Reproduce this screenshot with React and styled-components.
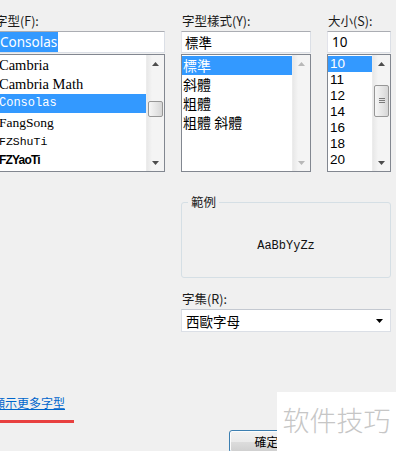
import React from "react";
import styled, { createGlobalStyle } from "styled-components";

const GlobalStyle = createGlobalStyle`
  html, body {
    margin: 0;
    background: #f0f0f0;
  }
  body {
    font-family: "Noto Sans", "Noto Sans CJK TC", sans-serif;
    color: #000;
  }
`;

const cjk = `"Noto Sans CJK TC", "Noto Sans", sans-serif`;

const Dialog = styled.div`
  position: relative;
  width: 396px;
  height: 451px;
  overflow: hidden;
  background: #f0f0f0;
`;

const Grid = styled.div`
  display: grid;
  grid-template-columns: 171px 130px 64px;
  column-gap: 16px;
  margin-left: -6px;
  padding-top: 13px;
`;

const Column = styled.div`
  display: flex;
  flex-direction: column;
`;

const Label = styled.div`
  font-family: ${cjk};
  font-size: 12.5px;
  line-height: 15px;
  height: 15px;
  margin-bottom: 3px;
  padding-left: ${(p) => p.$indent || 1}px;
  white-space: nowrap;
  color: #1a1a1a;
`;

const TextBox = styled.div`
  box-sizing: border-box;
  height: 22px;
  background: #fff;
  border: 1px solid #dbdfe6;
  border-top-color: #abadb3;
  border-left-color: #e2e3ea;
  padding-left: ${(p) => p.$pad || 3}px;
  font-family: ${(p) => p.$font || cjk};
  font-size: 13.5px;
  line-height: 20px;
  white-space: nowrap;
  overflow: hidden;
`;

const Selected = styled.span`
  background: #3399ff;
  color: #fff;
  padding: 1px 1px 1px 0;
`;

const ListBox = styled.div`
  box-sizing: border-box;
  margin-top: 1px;
  height: 118px;
  border: 1px solid #828790;
  background: #fff;
  display: flex;
`;

const Items = styled.div`
  flex: 1;
  padding-top: 1px;
  overflow: hidden;
`;

const Item = styled.div`
  height: ${(p) => p.$h}px;
  line-height: ${(p) => p.$h}px;
  padding-left: ${(p) => p.$pad}px;
  background: ${(p) => (p.$active ? "#3399ff" : "transparent")};
  color: ${(p) => (p.$active ? "#fff" : "#000")};
  font-family: ${(p) => p.$font};
  font-size: ${(p) => p.$size}px;
  font-weight: ${(p) => p.$weight || 400};
  letter-spacing: ${(p) => p.$ls || 0}px;
  white-space: nowrap;
  overflow: hidden;
`;

const ScrollBar = styled.div`
  width: 17px;
  display: flex;
  flex-direction: column;
  background: linear-gradient(to right, #e8e8e8, #f4f4f4 30%, #f4f4f4);
  border-left: 1px solid #ececec;
`;

const ArrowButton = styled.div`
  height: 17px;
  display: flex;
  align-items: center;
  justify-content: center;
`;

const Spacer = styled.div`
  flex: 1;
`;

const Thumb = styled.div`
  box-sizing: border-box;
  margin: ${(p) => p.$offset}px 1px 0 1px;
  height: ${(p) => p.$h}px;
  border: 1px solid #979797;
  border-radius: 2px;
  background: linear-gradient(to right, #f6f6f6, #e4e4e4 60%, #d6d6d6);
  display: flex;
  align-items: center;
  justify-content: center;
`;

const Group = styled.div`
  grid-column: 2 / 4;
  position: relative;
  box-sizing: border-box;
  margin-top: 30px;
  height: 76px;
  border: 1px solid #d5dfe5;
  border-radius: 3px;
  display: flex;
  align-items: center;
  justify-content: center;
  padding-top: 12px;
`;

const Legend = styled.span`
  position: absolute;
  top: -9px;
  left: 6px;
  padding: 0 3px;
  background: #f0f0f0;
  font-family: ${cjk};
  font-size: 12.5px;
  line-height: 15px;
  color: #1a1a1a;
`;

const SampleText = styled.span`
  font-family: "Liberation Mono", "DejaVu Sans Mono", monospace;
  font-size: 12px;
  color: #111;
`;

const Wide = styled.div`
  grid-column: 2 / 4;
  margin-top: ${(p) => p.$mt || 0}px;
`;

const Combo = styled.div`
  grid-column: 2 / 4;
  box-sizing: border-box;
  height: 23px;
  background: #fff;
  border: 1px solid #dbdfe6;
  border-top-color: #c4c9d1;
  display: flex;
  align-items: center;
  justify-content: space-between;
  padding: 0 7px 0 4px;
  font-family: ${cjk};
  font-size: 13.5px;
`;

const Footer = styled.div`
  padding-top: 63px;
`;

const MoreLink = styled.a`
  display: block;
  width: max-content;
  margin-left: -7px;
  font-family: ${cjk};
  font-size: 12px;
  line-height: 16px;
  color: #0066cc;
  text-decoration: underline;
  white-space: nowrap;
`;

const Marker = styled.div`
  width: 74px;
  height: 3px;
  margin-top: 9px;
  background: #e8403f;
`;

const ButtonRow = styled.div`
  display: flex;
  justify-content: flex-end;
  padding-right: 92px;
  margin-top: 7px;
`;

const Button = styled.button`
  box-sizing: border-box;
  width: 75px;
  height: 23px;
  border: 1px solid #3c7fb1;
  border-radius: 3px;
  background: linear-gradient(#f2f2f2, #ebebeb 50%, #dddddd 51%, #cfcfcf);
  box-shadow: inset 0 0 0 1px #fcfcfc;
  font-family: ${cjk};
  font-size: 12px;
  color: #000;
  padding: 0;
`;

const Watermark = styled.div`
  position: absolute;
  right: 0;
  bottom: 0;
  width: 119px;
  height: 59px;
  background: #fff;
  display: flex;
  align-items: center;
  justify-content: center;
  padding-bottom: 4px;
  box-sizing: border-box;
  font-family: "Noto Sans CJK SC", sans-serif;
  font-size: 27px;
  font-weight: 300;
  color: #c6c6c6;
  white-space: nowrap;
`;

function Arrow({ down, color = "#4d4d4d" }) {
  return (
    <svg width="7" height="4" viewBox="0 0 7 4">
      <polygon
        points={down ? "0,0 7,0 3.5,4" : "0,4 7,4 3.5,0"}
        fill={color}
      />
    </svg>
  );
}

function Grip() {
  return (
    <svg width="6" height="6" viewBox="0 0 6 6">
      <path d="M0 0.5h6M0 2.5h6M0 4.5h6" stroke="#7a7a7a" strokeWidth="1" />
    </svg>
  );
}

function Scroll({ thumb, grip, disabled }) {
  const color = disabled ? "#b8b8b8" : "#4d4d4d";
  return (
    <ScrollBar>
      <ArrowButton>
        <Arrow color={color} />
      </ArrowButton>
      {thumb && (
        <Thumb $offset={thumb.offset} $h={thumb.h}>
          {grip && <Grip />}
        </Thumb>
      )}
      <Spacer />
      <ArrowButton>
        <Arrow down color={color} />
      </ArrowButton>
    </ScrollBar>
  );
}

const fonts = [
  { name: "Cambria", font: `"Liberation Serif", serif`, size: 14.5 },
  { name: "Cambria Math", font: `"Liberation Serif", serif`, size: 14.5 },
  { name: "Consolas", font: `"Liberation Mono", monospace`, size: 12, active: true },
  { name: "FangSong", font: `"Liberation Serif", serif`, size: 13.5 },
  { name: "FZShuTi", font: `"Liberation Mono", monospace`, size: 11.5 },
  { name: "FZYaoTi", font: `"Liberation Sans", sans-serif`, size: 12, weight: 700, ls: -0.8 },
];

const styles = ["標準", "斜體", "粗體", "粗體 斜體"];
const sizes = ["10", "11", "12", "14", "16", "18", "20"];

export default function App() {
  return (
    <>
      <GlobalStyle />
      <Dialog>
        <Grid>
          <Column>
            <Label>字型(F):</Label>
            <TextBox $pad={5} $font={`"Noto Sans", sans-serif`}>
              <Selected>Consolas</Selected>
            </TextBox>
            <ListBox>
              <Items>
                {fonts.map((f) => (
                  <Item
                    key={f.name}
                    $h={19}
                    $pad={4}
                    $font={f.font}
                    $size={f.size}
                    $weight={f.weight}
                    $ls={f.ls}
                    $active={f.active}
                  >
                    {f.name}
                  </Item>
                ))}
              </Items>
              <Scroll thumb={{ offset: 29, h: 16 }} />
            </ListBox>
          </Column>

          <Column>
            <Label>字型樣式(Y):</Label>
            <TextBox $pad={3}>標準</TextBox>
            <ListBox>
              <Items>
                {styles.map((s, i) => (
                  <Item key={s} $h={19} $pad={1} $font={cjk} $size={14} $active={i === 0}>
                    {s}
                  </Item>
                ))}
              </Items>
              <Scroll disabled />
            </ListBox>
          </Column>

          <Column>
            <Label>大小(S):</Label>
            <TextBox $pad={4} $font={`"Noto Sans", sans-serif`}>
              10
            </TextBox>
            <ListBox>
              <Items>
                {sizes.map((s, i) => (
                  <Item
                    key={s}
                    $h={16}
                    $pad={2}
                    $font={`"Liberation Sans", sans-serif`}
                    $size={13.5}
                    $active={i === 0}
                  >
                    {s}
                  </Item>
                ))}
              </Items>
              <Scroll thumb={{ offset: 13, h: 32 }} grip />
            </ListBox>
          </Column>

          <Group>
            <Legend>範例</Legend>
            <SampleText>AaBbYyZz</SampleText>
          </Group>

          <Wide $mt={13}>
            <Label>字集(R):</Label>
          </Wide>
          <Combo>
            <span>西歐字母</span>
            <Arrow down color="#000" />
          </Combo>
        </Grid>

        <Footer>
          <MoreLink href="#">顯示更多字型</MoreLink>
          <Marker />
          <ButtonRow>
            <Button>確定</Button>
          </ButtonRow>
        </Footer>

        <Watermark>软件技巧</Watermark>
      </Dialog>
    </>
  );
}
